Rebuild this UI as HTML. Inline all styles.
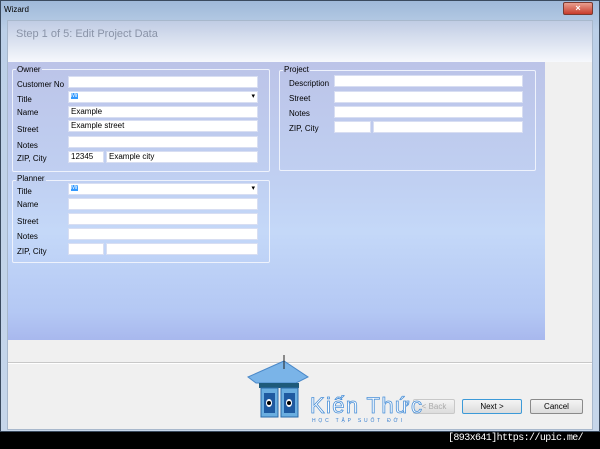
<!DOCTYPE html>
<html><head><meta charset="utf-8"><style>
*{margin:0;padding:0;box-sizing:border-box}
body{width:600px;height:449px;overflow:hidden;background:#000;position:relative;font-family:"Liberation Sans",sans-serif;font-size:8px;color:#000}
.a{position:absolute}
.win{left:0;top:0;width:600px;height:432px;background:linear-gradient(180deg,#9fb9d9,#bcd0e8 30px,#c6d6ea);border:1px solid #3a4a5e}
.in{background:#fff;height:12px;border:1px solid #d8def2}
.lbl{font-size:8px}
.grp{border:1px solid #eef2fc;border-radius:2px}
.gt{font-size:8px;padding:0 1px}
.btn{border:1px solid #8a8a8a;border-radius:2px;background:linear-gradient(#f4f4f4,#dcdcdc);font-size:8px;text-align:center;line-height:13px;height:15px}
</style></head><body>
<div class="a win"></div>
<div class="a" style="left:4px;top:5px;font-size:8px;color:#000">Wizard</div>
<div class="a" style="left:563px;top:2px;width:30px;height:13px;background:linear-gradient(#e8a090,#c83c2c);border:1px solid #7a3a30;border-radius:2px;color:#fff;text-align:center;font-size:9px;line-height:11px;font-weight:bold">×</div>
<div class="a" style="left:7px;top:20px;width:586px;height:410px;background:#f0f0f0;border:1px solid #a8b8cc"></div>
<div class="a" style="left:8px;top:21px;width:584px;height:41px;background:linear-gradient(#c0cce4,#f6f8fc)"></div>
<div class="a" style="left:16px;top:28px;font-size:11px;color:#8a94a8">Step 1 of 5: Edit Project Data</div>
<div class="a" style="left:8px;top:62px;width:537px;height:278px;background:linear-gradient(180deg,#bcc4e8 0px,#c0d0f2 120px,#c4d8f8 170px,#b4c8f4 250px,#a8b8ee 278px)"></div>
<div class="a" style="left:8px;top:362px;width:584px;height:1px;background:#c8c8c8"></div>
<div class="a" style="left:8px;top:363px;width:584px;height:1px;background:#fff"></div>

<!-- Owner -->
<div class="a grp" style="left:12px;top:69px;width:258px;height:103px"></div>
<div class="a gt" style="left:16px;top:65px;background:#bcc4e8">Owner</div>
<div class="a lbl" style="left:17px;top:80px">Customer No</div>
<div class="a in" style="left:68px;top:76px;width:190px"></div>
<div class="a lbl" style="left:17px;top:95px">Title</div>
<div class="a in" style="left:68px;top:91px;width:190px"><span style="background:#3399ff;color:#fff;font-size:6px;position:absolute;left:2px;top:1px">Mr</span><span style="position:absolute;right:2px;top:0;font-size:7px">▾</span></div>
<div class="a lbl" style="left:17px;top:108px">Name</div>
<div class="a in" style="left:68px;top:106px;width:190px;font-size:8px;padding-left:2px;line-height:10px">Example</div>
<div class="a lbl" style="left:17px;top:125px">Street</div>
<div class="a in" style="left:68px;top:120px;width:190px;padding-left:2px;line-height:10px">Example street</div>
<div class="a lbl" style="left:17px;top:141px">Notes</div>
<div class="a in" style="left:68px;top:136px;width:190px"></div>
<div class="a lbl" style="left:17px;top:154px">ZIP, City</div>
<div class="a in" style="left:68px;top:151px;width:36px;padding-left:2px;line-height:10px">12345</div>
<div class="a in" style="left:106px;top:151px;width:152px;padding-left:2px;line-height:10px">Example city</div>

<!-- Planner -->
<div class="a grp" style="left:12px;top:180px;width:258px;height:83px"></div>
<div class="a gt" style="left:16px;top:174px;background:#c0d0f2">Planner</div>
<div class="a lbl" style="left:17px;top:187px">Title</div>
<div class="a in" style="left:68px;top:183px;width:190px"><span style="background:#3399ff;color:#fff;font-size:6px;position:absolute;left:2px;top:1px">Mr</span><span style="position:absolute;right:2px;top:0;font-size:7px">▾</span></div>
<div class="a lbl" style="left:17px;top:200px">Name</div>
<div class="a in" style="left:68px;top:198px;width:190px"></div>
<div class="a lbl" style="left:17px;top:217px">Street</div>
<div class="a in" style="left:68px;top:213px;width:190px"></div>
<div class="a lbl" style="left:17px;top:232px">Notes</div>
<div class="a in" style="left:68px;top:228px;width:190px"></div>
<div class="a lbl" style="left:17px;top:247px">ZIP, City</div>
<div class="a in" style="left:68px;top:243px;width:36px"></div>
<div class="a in" style="left:106px;top:243px;width:152px"></div>

<!-- Project -->
<div class="a grp" style="left:279px;top:70px;width:257px;height:101px"></div>
<div class="a gt" style="left:283px;top:65px;background:#bcc4e8">Project</div>
<div class="a lbl" style="left:289px;top:79px">Description</div>
<div class="a in" style="left:334px;top:75px;width:189px"></div>
<div class="a lbl" style="left:289px;top:94px">Street</div>
<div class="a in" style="left:334px;top:91px;width:189px"></div>
<div class="a lbl" style="left:289px;top:109px">Notes</div>
<div class="a in" style="left:334px;top:106px;width:189px"></div>
<div class="a lbl" style="left:289px;top:124px">ZIP, City</div>
<div class="a in" style="left:334px;top:121px;width:37px"></div>
<div class="a in" style="left:373px;top:121px;width:150px"></div>

<!-- buttons -->
<div class="a btn" style="left:413px;top:399px;width:42px;color:#aaa;border-color:#c8c8c8">&lt; Back</div>
<div class="a btn" style="left:462px;top:399px;width:60px;border-color:#3c9ad8">Next &gt;</div>
<div class="a btn" style="left:530px;top:399px;width:53px">Cancel</div>

<!-- logo -->
<svg class="a" style="left:246px;top:355px" width="200" height="70">
<polygon points="2,22 38,6 62,22 50,28 10,28" fill="#7ab4e8" stroke="#4a88c8"/>
<rect x="13" y="28" width="40" height="5" fill="#1e5a7a"/>
<rect x="15" y="33" width="17" height="29" fill="#6aaee0" stroke="#2a6aa8"/>
<rect x="35" y="33" width="17" height="29" fill="#6aaee0" stroke="#2a6aa8"/>
<rect x="18" y="38" width="11" height="20" fill="#1e5aa0"/><rect x="38" y="38" width="11" height="20" fill="#1e5aa0"/>
<ellipse cx="23" cy="48" rx="3" ry="4" fill="#fff"/><ellipse cx="43" cy="48" rx="3" ry="4" fill="#fff"/>
<circle cx="23" cy="48" r="2" fill="#000"/><circle cx="43" cy="48" r="2" fill="#000"/>
<line x1="38" y1="0" x2="38" y2="14" stroke="#222"/>
<text x="64" y="58" font-family="Liberation Sans" font-size="22" textLength="112" fill="#fff" stroke="#4a90d8" stroke-width="0.8">Kiến Thức</text>
<text x="66" y="67" font-family="Liberation Sans" font-size="5" textLength="90" fill="#3a80d0">HỌC TẬP SUỐT ĐỜI</text>
</svg>
<div class="a" style="left:448px;top:433px;font-family:'Liberation Mono',monospace;font-size:10px;letter-spacing:-0.6px;color:#fff">[893x641]https://upic.me/</div>
</body></html>
